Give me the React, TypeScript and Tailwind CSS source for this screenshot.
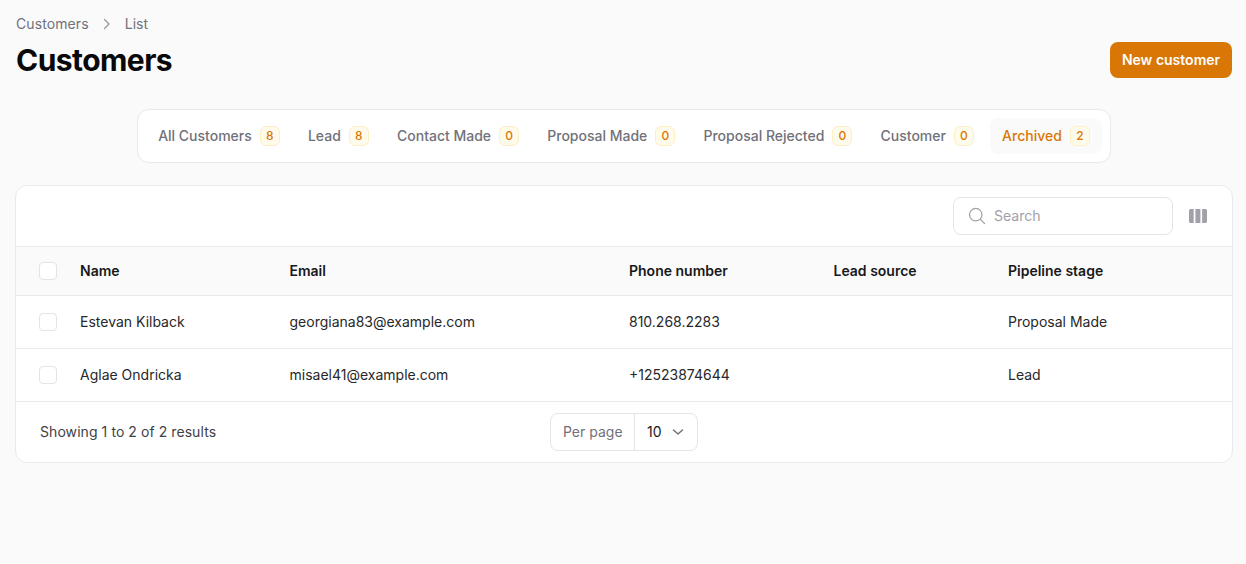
const tabs = [
  { label: "All Customers", count: 8 },
  { label: "Lead", count: 8 },
  { label: "Contact Made", count: 0 },
  { label: "Proposal Made", count: 0 },
  { label: "Proposal Rejected", count: 0 },
  { label: "Customer", count: 0 },
  { label: "Archived", count: 2, active: true },
]

const rows = [
  { name: "Estevan Kilback", email: "georgiana83@example.com", phone: "810.268.2283", stage: "Proposal Made" },
  { name: "Aglae Ondricka", email: "misael41@example.com", phone: "+12523874644", stage: "Lead" },
]

function Checkbox() {
  return <div className="h-[18px] w-[18px] rounded-[4px] border border-[#e4e4e7] bg-white" />
}

export default function App() {
  return (
    <div className="min-h-[564px] bg-[#fafafa] pl-[16px] pr-[14px] pt-[16px] font-['Inter',sans-serif] text-sm text-[#18181b] antialiased">
      {/* 页头 */}
      <div className="flex h-[16px] items-center gap-x-[8px] text-[#71717a]">
        <span className="tracking-[0.1px]">Customers</span>
        <svg className="h-[20px] w-[20px] text-[#a1a1aa]" viewBox="0 0 20 20" fill="none" stroke="currentColor" strokeWidth={1.5}>
          <path strokeLinecap="round" strokeLinejoin="round" d="M7.5 5.5 12 10l-4.5 4.5" />
        </svg>
        <span>List</span>
      </div>
      <div className="mt-[10px] flex items-start justify-between">
        <h1 className="text-[30px] leading-[36px] font-bold tracking-[-0.55px] text-[#09090b]">Customers</h1>
        <button className="h-[36px] w-[122px] rounded-lg bg-[#d97706] text-sm font-semibold text-white">
          New customer
        </button>
      </div>

      {/* 标签页 */}
      <div className="mt-[31px] flex justify-center">
        <div className="flex gap-x-[4.167px] rounded-xl border border-[#e9e9eb] bg-white px-[8.5px] py-[8px]">
          {tabs.map((tab) => (
            <div
              key={tab.label}
              className={`flex h-[36px] items-center gap-x-[8px] rounded-lg px-[12px] font-medium ${
                tab.active ? "bg-[#fafafa] text-[#d97706]" : "text-[#71717a]"
              }`}
            >
              <span>{tab.label}</span>
              <span className="flex h-[20px] w-[20px] items-center justify-center rounded-md border border-[#fdeec8] bg-[#fffbeb] text-xs font-medium text-[#d97706]">
                {tab.count}
              </span>
            </div>
          ))}
        </div>
      </div>

      {/* 表格 */}
      <div className="mt-[22px] mr-[-1px] ml-[-1px] overflow-hidden rounded-xl border border-[#e9e9eb] bg-white">
        <div className="flex h-[60px] items-center justify-end gap-x-[16px] pr-[25px]">
          <div className="flex h-[38px] w-[220px] items-center gap-x-[7px] rounded-lg border border-[#e4e4e7] bg-white pl-[13px]">
            <svg className="h-[20px] w-[20px] text-[#a1a1aa]" viewBox="0 0 24 24" fill="none" stroke="currentColor" strokeWidth={1.5}>
              <path strokeLinecap="round" strokeLinejoin="round" d="m21 21-5.197-5.197m0 0A7.5 7.500 0 1 0 5.196 5.196a7.500 7.500 0 0 0 10.607 10.607Z" />
            </svg>
            <span className="text-[#a1a1aa]">Search</span>
          </div>
          <svg className="h-[14px] w-[18px] text-[#a1a1aa]" viewBox="0 0 18 14" fill="currentColor">
            <path d="M1.500 0h3.200v14H1.500A1.500 1.500 0 0 1 0 12.500v-11A1.500 1.500 0 0 1 1.500 0Z" />
            <rect x="6.400" width="5" height="14" />
            <path d="M13.100 0h3.400A1.500 1.500 0 0 1 18 1.500v11a1.500 1.500 0 0 1-1.500 1.500h-3.400Z" />
          </svg>
        </div>
        <table className="w-full table-fixed border-collapse text-left">
          <thead>
            <tr className="h-[49px] border-y border-[#e9e9eb] bg-[#fafafa]">
              <th className="w-[64px] pl-[23px] font-normal">
                <Checkbox />
              </th>
              <th className="w-[209.5px] font-semibold">Name</th>
              <th className="w-[339.5px] font-semibold">Email</th>
              <th className="w-[204.5px] font-semibold">Phone number</th>
              <th className="w-[174.5px] font-semibold">Lead source</th>
              <th className="font-semibold">Pipeline stage</th>
            </tr>
          </thead>
          <tbody className="text-[#27272a]">
            {rows.map((row) => (
              <tr key={row.email} className="h-[53px] border-b border-[#e9e9eb]">
                <td className="pl-[23px]">
                  <Checkbox />
                </td>
                <td>{row.name}</td>
                <td>{row.email}</td>
                <td>{row.phone}</td>
                <td />
                <td>{row.stage}</td>
              </tr>
            ))}
          </tbody>
        </table>
        <div className="relative flex h-[60px] items-center px-[24px]">
          <span className="tracking-[0.07px] text-[#3f3f46]">Showing 1 to 2 of 2 results</span>
          <div className="absolute left-[534px] top-[11px] flex h-[38px] w-[148px] items-center rounded-lg border border-[#e4e4e7] bg-white">
            <span className="flex h-full w-[84px] items-center border-r border-[#e4e4e7] pl-[12px] text-[#71717a]">
              Per page
            </span>
            <span className="pl-[12px]">10</span>
            <svg className="ml-[6px] h-[20px] w-[20px] text-[#71717a]" viewBox="0 0 20 20" fill="none" stroke="currentColor" strokeWidth={1.5}>
              <path strokeLinecap="round" strokeLinejoin="round" d="M5.500 8 10 12l4.500-4" />
            </svg>
          </div>
        </div>
      </div>
    </div>
  )
}
